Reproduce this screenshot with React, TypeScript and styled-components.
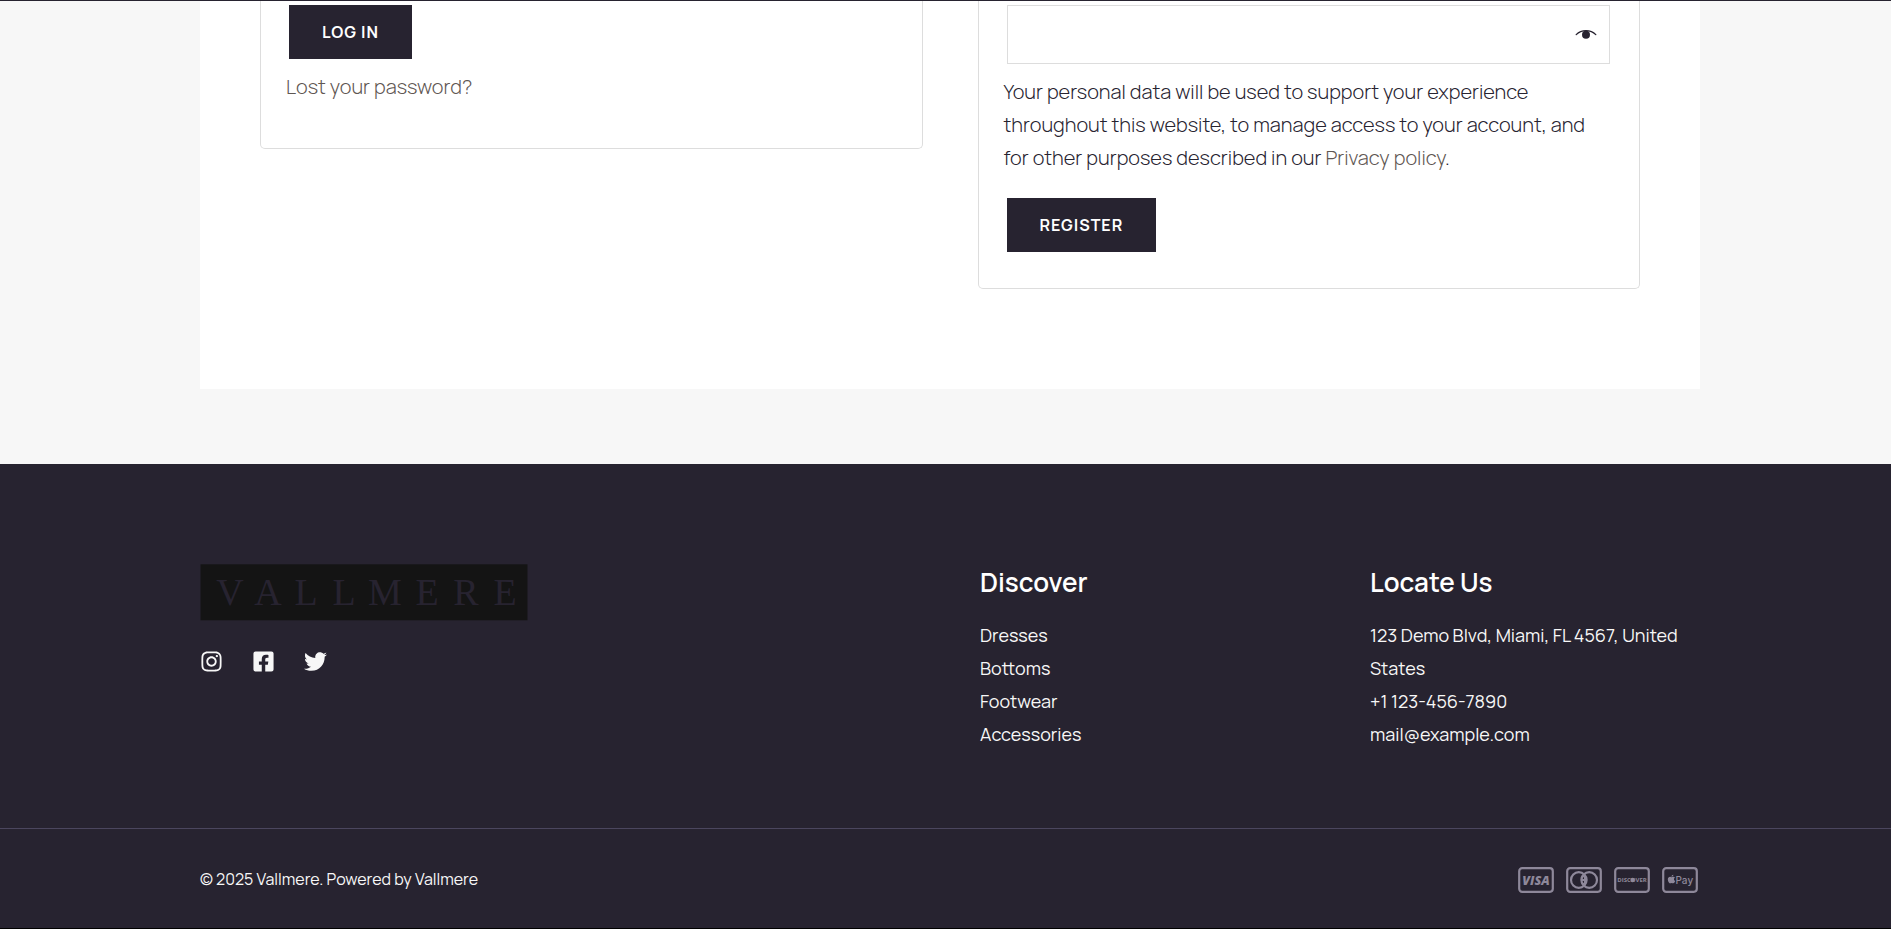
import React, { useState } from "react";
import styled, { createGlobalStyle } from "styled-components";
import { FaApple, FaFacebookSquare, FaInstagram, FaTwitter } from "react-icons/fa";

const ink = "#272330";
const line = "#dddddd";
const pale = "#f7f7f7";
const muted = "#8e889a";

const GlobalStyle = createGlobalStyle`
  *, *::before, *::after { box-sizing: border-box; }
  body {
    margin: 0;
    background: ${pale};
    color: ${ink};
    font-family: Manrope, Inter, "Liberation Sans", sans-serif;
    font-size: 20px;
    font-weight: 300;
    line-height: 33px;
  }
  p, h2, ul, form { margin: 0; padding: 0; }
  ul { list-style: none; }
`;

const Page = styled.div`
  border-top: 1px solid ${ink};
`;

const Main = styled.main`
  padding: 0 0 75px 9px;
`;

const Content = styled.section`
  display: grid;
  grid-template-columns: 1fr 1fr;
  gap: 55px;
  align-items: start;
  max-width: 1500px;
  margin: 0 auto;
  padding: 0 60px 100px;
  background: #fff;
`;

const Card = styled.form<{ $end: number }>`
  display: flex;
  flex-direction: column;
  align-items: flex-start;
  padding: 4px 25px ${(p) => p.$end}px;
  border: 1px solid ${line};
  border-top: 0;
  border-radius: 0 0 5px 5px;
`;

const SubmitButton = styled.button`
  height: 54px;
  margin: 0 3px;
  padding: 0 33px;
  border: 0;
  background: ${ink};
  color: #fff;
  font: inherit;
  font-size: 16px;
  font-weight: 700;
  letter-spacing: 1px;
  text-transform: uppercase;
  cursor: pointer;
`;

const TextLink = styled.a`
  color: #5f5753;
  text-decoration: none;
`;

const LostPassword = styled.p`
  margin-top: 11px;
`;

const PasswordField = styled.div`
  display: flex;
  align-items: center;
  align-self: stretch;
  height: 59px;
  margin: 0 4px 0 3px;
  border: 1px solid ${line};
`;

const PasswordInput = styled.input`
  flex: 1;
  min-width: 0;
  height: 100%;
  padding: 0 16px;
  border: 0;
  outline: 0;
  background: transparent;
  color: inherit;
  font: inherit;
`;

const RevealButton = styled.button`
  display: flex;
  padding: 0 12px;
  border: 0;
  background: none;
  color: ${ink};
  cursor: pointer;
`;

const PrivacyNote = styled.p`
  margin: 11px 0 24px;
`;

const Footer = styled.footer`
  background: ${ink};
  color: ${pale};
  font-size: 18px;
  font-weight: 400;
  border-bottom: 1px solid #000;
`;

const WidgetBand = styled.div`
  padding: 100px 0 77px 9px;
  border-bottom: 1px solid #4b465e;
`;

const Widgets = styled.div`
  display: grid;
  grid-template-columns: 52% 26% 22%;
  max-width: 1500px;
  margin: 0 auto;
`;

const Logo = styled.svg`
  display: block;
  width: 328px;
  height: 57px;
`;

const Socials = styled.nav`
  display: flex;
  gap: 29px;
  margin-top: 29px;
  font-size: 23px;
`;

const SocialLink = styled.a`
  display: flex;
  color: ${pale};
`;

const WidgetTitle = styled.h2`
  margin: 2px 0 20px;
  color: #fff;
  font-size: 26px;
  font-weight: 600;
`;

const FooterLink = styled.a`
  color: inherit;
  text-decoration: none;
`;

const BottomBand = styled.div`
  padding: 34px 0 32px 9px;
`;

const BottomBar = styled.div`
  display: flex;
  align-items: center;
  justify-content: space-between;
  max-width: 1500px;
  margin: 0 auto;
  padding-right: 2px;
  font-size: 16px;
`;

const Payments = styled.ul`
  display: flex;
  gap: 12px;
`;

const PaymentMark = styled.svg`
  display: block;
  width: 36px;
  height: 26px;
  fill: ${muted};
`;

const wordmark: [string, number][] = [
  ["V", 30], ["A", 68], ["L", 106], ["L", 144],
  ["M", 185], ["E", 227], ["R", 266], ["E", 305],
];

function Wordmark() {
  return (
    <Logo viewBox="0 0 328 57" role="img" aria-label="Vallmere">
      <rect x="0.500" y="0.300" width="327" height="56" fill="#141414" />
      <g fill="#272330" fontFamily="'Liberation Serif', serif" fontSize="38" textAnchor="middle">
        {wordmark.map(([letter, x]) => (
          <text key={x} x={x} y="41">{letter}</text>
        ))}
      </g>
    </Logo>
  );
}

function Eye() {
  return (
    <svg width="22" height="14" viewBox="0 0 22 14" aria-hidden="true">
      <path d="M1.2 6.6C6.500 1.300 15.500 1.300 20.800 6.600" fill="none" stroke="currentColor" strokeWidth="1.300" strokeLinecap="round" />
      <circle cx="11" cy="6.700" r="4" fill="currentColor" />
    </svg>
  );
}

function Payment({ name, children }: { name: string; children: React.ReactNode }) {
  return (
    <li>
      <PaymentMark viewBox="0 0 36 26" role="img" aria-label={name}>
        <rect x="1.2" y="1.2" width="33.600" height="23.600" rx="3" fill="none" stroke={muted} strokeWidth="2.200" />
        {children}
      </PaymentMark>
    </li>
  );
}

export default function App() {
  const [shown, setShown] = useState(false);
  return (
    <Page>
      <GlobalStyle />
      <Main>
        <Content>
          <Card $end={45} onSubmit={(e) => e.preventDefault()}>
            <SubmitButton type="submit">Log in</SubmitButton>
            <LostPassword>
              <TextLink href="#lost-password">Lost your password?</TextLink>
            </LostPassword>
          </Card>
          <Card $end={36} onSubmit={(e) => e.preventDefault()}>
            <PasswordField>
              <PasswordInput type={shown ? "text" : "password"} aria-label="Password" autoComplete="new-password" />
              <RevealButton type="button" aria-label="Show password" onClick={() => setShown(!shown)}>
                <Eye />
              </RevealButton>
            </PasswordField>
            <PrivacyNote>
              Your personal data will be used to support your experience throughout this website, to
              manage access to your account, and for other purposes described in our{" "}
              <TextLink href="#privacy">Privacy policy</TextLink>.
            </PrivacyNote>
            <SubmitButton type="submit">Register</SubmitButton>
          </Card>
        </Content>
      </Main>
      <Footer>
        <WidgetBand>
          <Widgets>
            <div>
              <Wordmark />
              <Socials aria-label="Social media">
                <SocialLink href="#instagram" aria-label="Instagram"><FaInstagram /></SocialLink>
                <SocialLink href="#facebook" aria-label="Facebook"><FaFacebookSquare /></SocialLink>
                <SocialLink href="#twitter" aria-label="Twitter"><FaTwitter /></SocialLink>
              </Socials>
            </div>
            <div>
              <WidgetTitle>Discover</WidgetTitle>
              <ul>
                {["Dresses", "Bottoms", "Footwear", "Accessories"].map((item) => (
                  <li key={item}>
                    <FooterLink href={`#${item.toLowerCase()}`}>{item}</FooterLink>
                  </li>
                ))}
              </ul>
            </div>
            <div>
              <WidgetTitle>Locate Us</WidgetTitle>
              <p>123 Demo Blvd, Miami, FL 4567, United States</p>
              <p>+1 123-456-7890</p>
              <p>mail@example.com</p>
            </div>
          </Widgets>
        </WidgetBand>
        <BottomBand>
          <BottomBar>
            <p>© 2025 Vallmere. Powered by Vallmere</p>
            <Payments>
              <Payment name="Visa">
                <text x="18" y="17.500" textAnchor="middle" fontFamily="'Open Sans', sans-serif" fontSize="12.500" fontWeight="800" fontStyle="italic">VISA</text>
              </Payment>
              <Payment name="Diners Club">
                <g fill="none" stroke={muted} strokeWidth="2.200">
                  <circle cx="12.800" cy="13" r="7.800" />
                  <circle cx="23.200" cy="13" r="7.800" />
                </g>
                <path d="M15.500 8.500h4.500v9h-4.500v-1.800h2.500v-1.700h-2.500v-2h2.500v-1.700h-2.500z" />
              </Payment>
              <Payment name="Discover">
                <text x="18" y="15" textAnchor="middle" fontFamily="'Open Sans', sans-serif" fontSize="6" fontWeight="700">DISCOVER</text>
                <circle cx="18.600" cy="13" r="2.200" />
              </Payment>
              <Payment name="Apple Pay">
                <g transform="translate(4.500 7)">
                  <FaApple size={10} color={muted} />
                </g>
                <text x="13.500" y="17" fontFamily="Inter, sans-serif" fontSize="10" fontWeight="500">Pay</text>
              </Payment>
            </Payments>
          </BottomBar>
        </BottomBand>
      </Footer>
    </Page>
  );
}
